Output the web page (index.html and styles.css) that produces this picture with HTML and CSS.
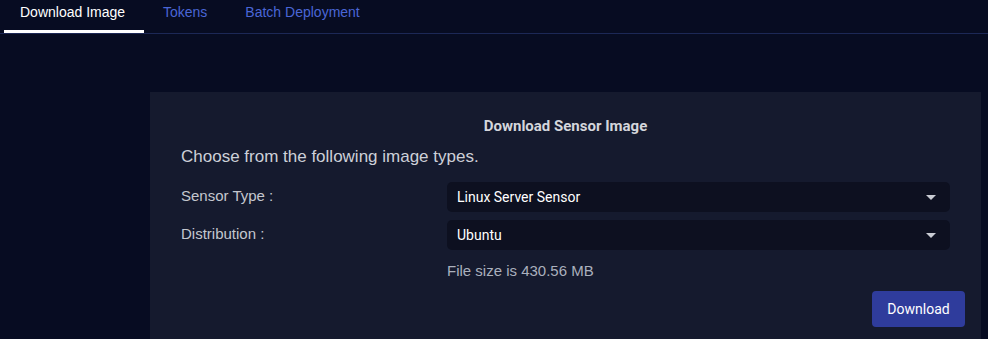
FILE: index.html
```html
<!DOCTYPE html>
<html lang="en">

<head>
    <meta charset="UTF-8">
    <meta name="viewport" content="width=device-width, initial-scale=1.0">
    <title>Download Image</title>
    <link rel="stylesheet" href="styles.css">
</head>

<body>
    <nav class="tabs">
        <a href="#" class="tab active">Download Image</a>
        <a href="#" class="tab">Tokens</a>
        <a href="#" class="tab">Batch Deployment</a>
    </nav>

    <main class="content">
        <section class="panel">
            <h2 class="panel-title">Download Sensor Image</h2>
            <p class="intro">Choose from the following image types.</p>

            <div class="form-grid">
                <label for="sensor-type">Sensor Type :</label>
                <div class="select" id="sensor-type">
                    <span>Linux Server Sensor</span>
                    <span class="caret"></span>
                </div>

                <label for="distribution">Distribution :</label>
                <div class="select" id="distribution">
                    <span>Ubuntu</span>
                    <span class="caret"></span>
                </div>

                <div></div>
                <p class="file-size">File size is 430.56 MB</p>
            </div>

            <div class="actions">
                <button class="btn-primary">Download</button>
            </div>
        </section>
    </main>
</body>

</html>
```

FILE: styles.css
```css
* {
    margin: 0;
    padding: 0;
    box-sizing: border-box;
}

body {
    background-color: #070c22;
    font-family: Arial, "Liberation Sans", sans-serif;
    height: 339px;
    overflow: hidden;
}

.tabs {
    display: flex;
    height: 34px;
    border-bottom: 1px solid #1c2856;
    padding-left: 4px;
}

.tab {
    display: block;
    height: 33px;
    padding: 4px 19px 0;
    font-size: 14px;
    color: #4a66d6;
    text-decoration: none;
}

.tab.active {
    color: #ffffff;
    padding: 4px 16px 0;
    min-width: 140px;
    border-bottom: 3px solid #ffffff;
}

.content {
    padding: 58px 7px 0 150px;
}

.panel {
    background-color: #151a2e;
    width: 831px;
    height: 260px;
    padding-top: 24px;
}

.panel-title {
    font-family: Roboto, sans-serif;
    font-size: 15px;
    font-weight: bold;
    color: #d4d6dc;
    text-align: center;
    line-height: 20px;
}

.intro {
    font-size: 17px;
    color: #cdd0d8;
    line-height: 22px;
    margin-top: 10px;
    padding-left: 31px;
}

.form-grid {
    display: grid;
    grid-template-columns: 266px 1fr;
    row-gap: 8px;
    padding: 0 31px;
    margin-top: 14px;
    align-items: center;
}

label {
    font-size: 15px;
    color: #c4c7cf;
    padding-bottom: 4px;
}

.select {
    display: flex;
    align-items: center;
    justify-content: space-between;
    height: 30px;
    padding: 0 14px 0 10px;
    background-color: #0d1020;
    border-radius: 5px;
    font-family: Roboto, sans-serif;
    font-size: 14px;
    color: #ffffff;
}

.caret {
    width: 0;
    height: 0;
    border-left: 5px solid transparent;
    border-right: 5px solid transparent;
    border-top: 5px solid #c9ccd4;
}

.file-size {
    font-size: 15px;
    color: #aab0bd;
    line-height: 20px;
    margin-top: 3px;
}

.actions {
    display: flex;
    justify-content: flex-end;
    padding-right: 16px;
    margin-top: 10px;
}

.btn-primary {
    width: 93px;
    height: 36px;
    background-color: #2f3c9c;
    color: #ffffff;
    border: none;
    border-radius: 4px;
    font-family: Roboto, sans-serif;
    font-size: 14px;
    cursor: pointer;
}

.btn-primary:hover {
    background-color: #3846b0;
}
```
